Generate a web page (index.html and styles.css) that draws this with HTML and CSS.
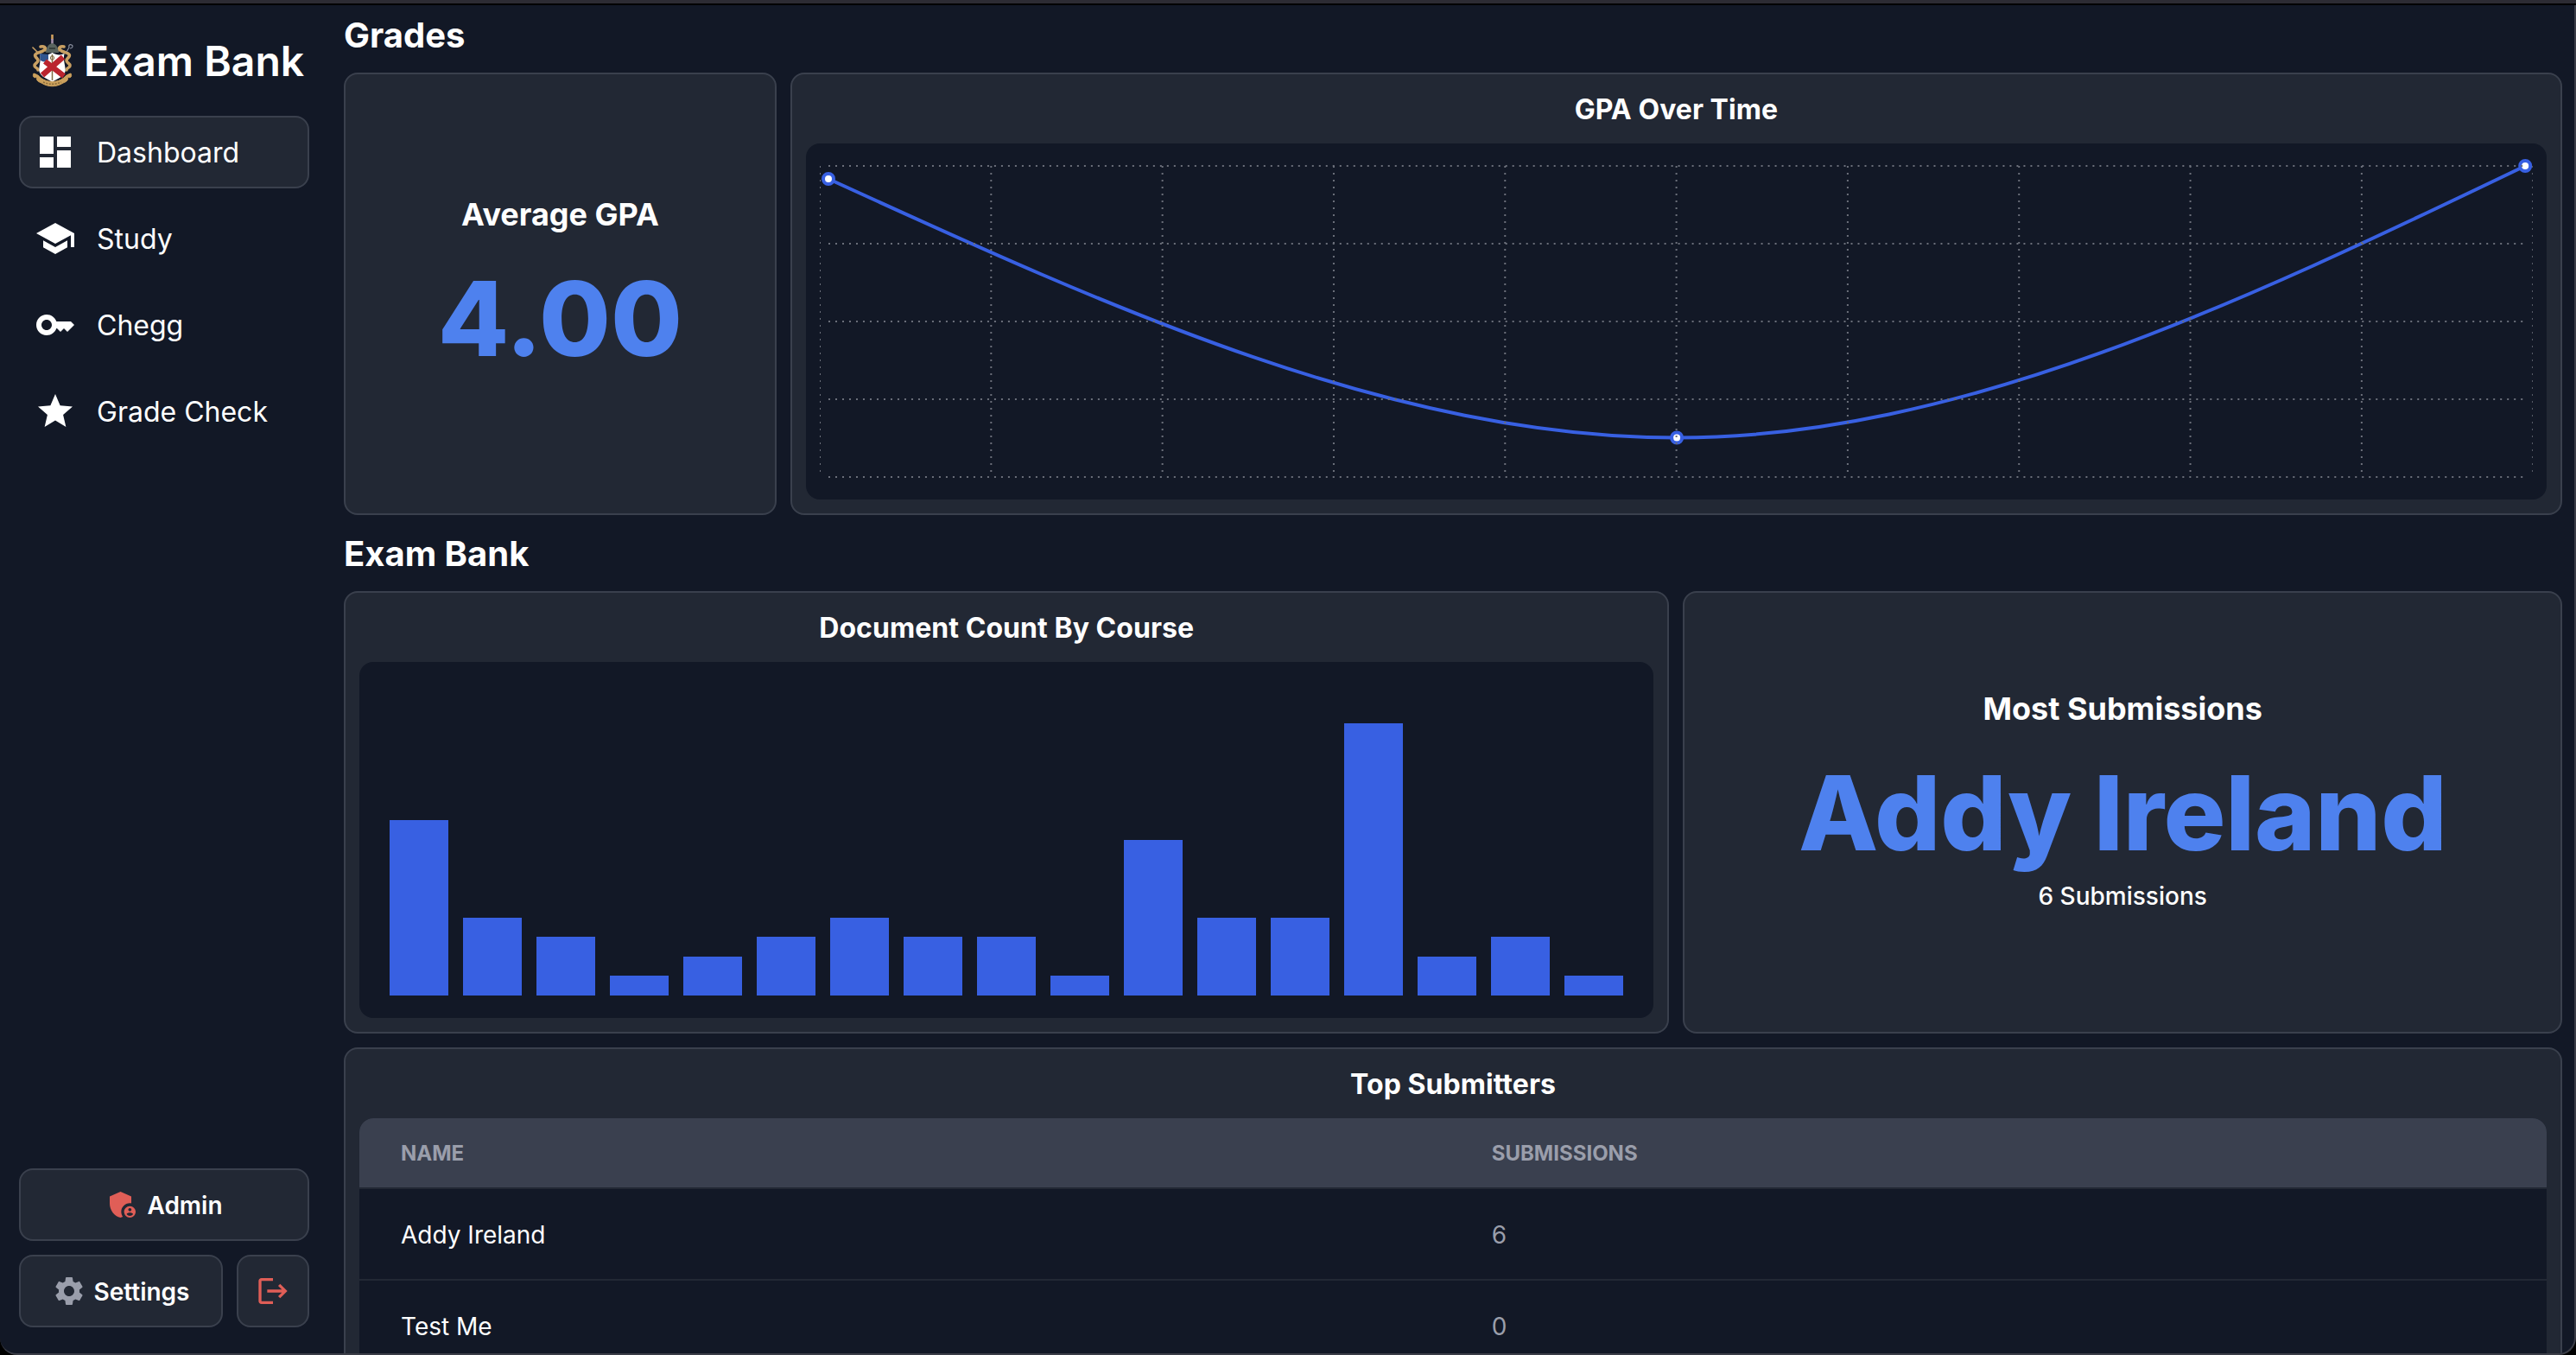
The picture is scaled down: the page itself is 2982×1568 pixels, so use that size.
FILE: index.html
```html
<!DOCTYPE html>
<html lang="en">
<head>
<meta charset="utf-8">
<title>Exam Bank</title>
<link rel="stylesheet" href="styles.css">
</head>
<body>
<div class="window">
  <aside class="sidebar">
    <div class="brand">
      <svg class="crest" viewBox="0 0 50 64">
        <g fill="none" stroke="#c9a063" stroke-linecap="round" stroke-linejoin="round">
          <path d="M2 16l6 6" stroke-width="1.600"/>
          <path d="M11 15c4-1 6 1 6 4M15 19c-3 3-8 2-10 5s3 4 3 7-4 3-4 6 4 2 4 5" stroke-width="3.600"/>
          <path d="M38 15c-4-1-6 1-6 4M34 19c3 3 8 2 10 5s-3 4-3 7 4 3 4 6-4 2-4 5" stroke-width="3.600"/>
        </g>
        <path d="M41 21l3-5c-1-3 1-4 3-3s1 4-2 4" fill="none" stroke="#8d93a3" stroke-width="1.200"/>
        <path d="M24.500 1v6" stroke="#d0a05e" stroke-width="2.600"/>
        <path d="M24.500 6v6" stroke="#a892ad" stroke-width="2.600"/>
        <path d="M17 22c1-7 3-10 7.500-11 4.500 1 6.500 4 7.500 11z" fill="#59645f"/>
        <path d="M21 17h7" stroke="#2b3332" stroke-width="1.500"/>
        <path d="M10 23c5 2 10 2 14.500-1 5 3 10 3 14 1-2 8 2 15 1 21-2 6-9 8-15 12-6-4-13-6-15-12-1-6 2.500-12 .5-21z" fill="#fff"/>
        <path d="M24.500 24v30" stroke="#806b42" stroke-width="1.500"/>
        <circle cx="24.500" cy="28" r="2.200" fill="none" stroke="#806b42"/>
        <path d="M10 23l10 1v6c-3 3-6 3-9 1z" fill="#31558f"/>
        <path d="M37 27L13 48M16 32l22 17" stroke="#bb242e" stroke-width="6.400"/>
        <path d="M3 46c-2 4 1 6 4 4-2 4 2 6 5 7 8 5 17 5 25 0 3-1 7-3 5-7 3 2 6 0 4-4-3 1-6 2-8 5-8 6-19 6-27 0-2-3-5-4-8-5z" fill="#cba05c" stroke="#cba05c"/>
        <path d="M14 56c7 3 14 3 21 0" fill="none" stroke="#876a3a" stroke-width="1.500" stroke-dasharray="2 1.500"/>
      </svg>
      <span class="brand-name">Exam Bank</span>
    </div>
    <nav class="nav">
      <a class="nav-item active"><svg class="icon-lg" viewBox="0 0 24 24"><path d="M3 13h8V3H3v10zm0 8h8v-6H3v6zm10 0h8V11h-8v10zm0-18v6h8V3h-8z"/></svg><span class="label">Dashboard</span></a>
      <a class="nav-item"><svg class="icon-lg" viewBox="0 0 24 24"><path d="M5 13.180v4L12 21l7-3.820v-4L12 17l-7-3.820zM12 3L1 9l11 6 9-4.910V17h2V9L12 3z"/></svg><span class="label">Study</span></a>
      <a class="nav-item"><svg class="icon-lg" viewBox="0 0 24 24"><path d="M21 10h-8.350C11.830 7.670 9.610 6 7 6c-3.310 0-6 2.690-6 6s2.690 6 6 6c2.610 0 4.830-1.670 5.650-4H13l2 2 2-2 2 2 4-4.040L21 10zM7 15c-1.650 0-3-1.350-3-3s1.350-3 3-3 3 1.350 3 3-1.350 3-3 3z"/></svg><span class="label">Chegg</span></a>
      <a class="nav-item"><svg class="icon-lg" viewBox="0 0 24 24"><path d="M12 17.270L18.180 21l-1.640-7.030L22 9.240l-7.190-.610L12 2 9.190 8.630 2 9.240l5.460 4.730L5.820 21z"/></svg><span class="label">Grade Check</span></a>
    </nav>
    <div class="actions">
      <button class="button"><svg class="icon red" viewBox="0 0 24 24"><path d="M17 11c.34 0 .67.04 1 .09V6.270L10.500 3 3 6.270v4.910c0 4.540 3.200 8.790 7.500 9.820.55-.13 1.080-.32 1.600-.55-.69-.98-1.100-2.170-1.100-3.450 0-3.310 2.690-6 6-6z"/><path d="M17 13c-2.210 0-4 1.790-4 4s1.790 4 4 4 4-1.790 4-4-1.790-4-4-4zm0 1.380c.62 0 1.120.51 1.120 1.120s-.51 1.120-1.120 1.120-1.120-.51-1.120-1.120.5-1.120 1.120-1.120zm0 5.370c-.93 0-1.740-.46-2.240-1.170.05-.72 1.510-1.080 2.240-1.080s2.190.36 2.240 1.080c-.5.71-1.310 1.170-2.240 1.170z"/></svg><span class="label">Admin</span></button>
      <div class="action-row">
        <button class="button grow"><svg class="icon gray" viewBox="0 0 24 24"><path d="M19.140 12.940c.04-.3.06-.61.06-.94 0-.32-.02-.64-.07-.94l2.030-1.580c.18-.14.23-.41.12-.61l-1.920-3.320c-.12-.22-.37-.29-.59-.22l-2.390.96c-.5-.38-1.030-.7-1.620-.94l-.36-2.540c-.04-.24-.24-.41-.48-.41h-3.840c-.24 0-.43.17-.47.41l-.36 2.540c-.59.24-1.130.57-1.620.94l-2.390-.96c-.22-.08-.47 0-.59.22L2.740 8.870c-.12.21-.08.47.12.61l2.030 1.580c-.05.3-.09.63-.09.94s.02.64.07.94l-2.030 1.580c-.18.14-.23.41-.12.61l1.920 3.320c.12.22.37.29.59.22l2.390-.96c.5.38 1.030.7 1.620.94l.36 2.540c.05.24.24.41.48.41h3.840c.24 0 .44-.17.47-.41l.36-2.540c.59-.24 1.130-.56 1.620-.94l2.390.96c.22.08.47 0 .59-.22l1.920-3.320c.12-.22.07-.47-.12-.61l-2.010-1.580zM12 15.600c-1.980 0-3.600-1.620-3.600-3.600s1.620-3.600 3.600-3.600 3.600 1.620 3.600 3.600-1.620 3.600-3.600 3.600z"/></svg><span class="label">Settings</span></button>
        <button class="button square" aria-label="Log out"><svg class="icon red" viewBox="0 0 24 24"><path d="M17 7l-1.410 1.410L18.170 11H8v2h10.170l-2.580 2.580L17 17l5-5zM4 5h8V3H4c-1.100 0-2 .9-2 2v14c0 1.100.9 2 2 2h8v-2H4V5z"/></svg></button>
      </div>
    </div>
  </aside>
  <main class="main">
    <h2 class="section-title">Grades</h2>
    <div class="grid">
      <section class="card stat">
        <h3 class="stat-title">Average GPA</h3>
        <div class="stat-value">4.00</div>
      </section>
      <section class="card span-4">
        <h3 class="card-title">GPA Over Time</h3>
        <div class="panel">
          <svg class="line-chart" viewBox="0 0 1984 380" preserveAspectRatio="none">
            <path class="curve" d="M10 25C337.500 174.750 665 324.500 992.500 324.500S1647.500 167.250 1975 10"/>
            <g class="points"><circle cx="10" cy="25" r="6"/><circle cx="992.500" cy="324.500" r="6"/><circle cx="1975" cy="10" r="6"/></g>
            <path class="gridlines" d="M10 10H1974M10 100H1974M10 190H1974M10 280H1974M10 370H1974"/>
            <path class="gridlines" d="M0 10V368M198.400 10V368M396.800 10V368M595.200 10V368M793.600 10V368M992 10V368M1190.400 10V368M1388.800 10V368M1587.200 10V368M1785.600 10V368M1984 10V368"/>
          </svg>
        </div>
      </section>
    </div>
    <h2 class="section-title">Exam Bank</h2>
    <div class="grid">
      <section class="card span-3">
        <h3 class="card-title">Document Count By Course</h3>
        <div class="panel bars">
          <i class="bar" style="height:203px"></i><i class="bar" style="height:90px"></i><i class="bar" style="height:68px"></i><i class="bar" style="height:23px"></i><i class="bar" style="height:45px"></i><i class="bar" style="height:68px"></i><i class="bar" style="height:90px"></i><i class="bar" style="height:68px"></i><i class="bar" style="height:68px"></i><i class="bar" style="height:23px"></i><i class="bar" style="height:180px"></i><i class="bar" style="height:90px"></i><i class="bar" style="height:90px"></i><i class="bar" style="height:315px"></i><i class="bar" style="height:45px"></i><i class="bar" style="height:68px"></i><i class="bar" style="height:23px"></i>
        </div>
      </section>
      <section class="card stat span-2">
        <h3 class="stat-title">Most Submissions</h3>
        <div class="stat-value name">Addy Ireland</div>
        <div class="stat-note">6 Submissions</div>
      </section>
    </div>
    <section class="card table-card">
      <h3 class="card-title">Top Submitters</h3>
      <table class="table">
        <thead><tr><th class="name-column">Name</th><th>Submissions</th></tr></thead>
        <tbody>
          <tr><td>Addy Ireland</td><td class="count">6</td></tr>
          <tr><td>Test Me</td><td class="count">0</td></tr>
        </tbody>
      </table>
    </section>
  </main>
</div>
</body>
</html>
```
FILE: styles.css
```css
* { box-sizing: border-box; }
body {
  margin: 0;
  height: 1568px;
  overflow: hidden;
  background: #000;
  color: #fff;
  font-family: Inter, "Liberation Sans", sans-serif;
  border-top: 4px solid #2c2b33;
  padding-top: 2px;
}
h2, h3 { margin: 0; }
.window {
  display: flex;
  height: 1562px;
  overflow: hidden;
  background: #121826;
  border-right: 2px solid #3b3d47;
  border-bottom: 2px solid #3b3d47;
  border-radius: 0 0 20px 20px;
}
.sidebar {
  width: 380px;
  flex: none;
  padding: 33px 22px 30px;
  display: flex;
  flex-direction: column;
}
.brand { display: flex; height: 95px; padding-left: 14px; }
.crest { width: 50px; height: 64px; margin-right: 11px; }
.brand-name { font-size: 48px; line-height: 64px; font-weight: 600; white-space: nowrap; }
.nav { display: flex; flex-direction: column; gap: 16px; }
.nav-item {
  display: flex;
  align-items: center;
  gap: 24px;
  height: 84px;
  padding: 0 16px;
  border: 2px solid transparent;
  border-radius: 16px;
  font-size: 32px;
  line-height: 48px;
}
.nav-item.active { background: #222834; border-color: #3a404d; }
.label { padding-top: 2px; }
.icon-lg { width: 48px; height: 48px; fill: #fff; }
.actions { margin-top: auto; display: flex; flex-direction: column; gap: 16px; }
.action-row { display: flex; gap: 16px; }
.button {
  display: flex;
  align-items: center;
  justify-content: center;
  gap: 8px;
  height: 84px;
  padding: 0;
  background: #222834;
  border: 2px solid #3a404d;
  border-radius: 16px;
  color: #fff;
  font: 600 28px/40px Inter, "Liberation Sans", sans-serif;
}
.grow { flex: 1; }
.square { width: 84px; }
.icon { width: 40px; height: 40px; }
.red { fill: #e05e57; }
.gray { fill: #9a9eab; }
.main {
  flex: 1;
  min-width: 0;
  display: flex;
  flex-direction: column;
  gap: 16px;
  padding: 6px 14px 0 18px;
}
.section-title { padding-top: 2px; font-size: 40px; line-height: 54px; font-weight: 700; }
.grid { display: grid; grid-template-columns: repeat(5, minmax(0, 1fr)); gap: 16px; flex: none; }
.span-2 { grid-column: span 2; }
.span-3 { grid-column: span 3; }
.span-4 { grid-column: span 4; }
.card {
  height: 512px;
  display: flex;
  flex-direction: column;
  gap: 16px;
  padding: 16px;
  background: #222834;
  border: 2px solid #3a404d;
  border-radius: 16px;
}
.card-title {
  padding-top: 2px;
  font-size: 32px;
  line-height: 46px;
  font-weight: 700;
  letter-spacing: 0.05px;
  text-align: center;
}
.panel { height: 412px; border-radius: 16px; background: #121826; padding: 16px; }
.line-chart { display: block; width: 100%; height: 380px; }
.curve { fill: none; stroke: #3860e2; stroke-width: 4; }
.points { fill: #fff; stroke: #3860e2; stroke-width: 4; }
.gridlines { fill: none; stroke: #6b6f7a; stroke-width: 2; stroke-dasharray: 2 6; }
.bars { display: flex; align-items: flex-end; gap: 17px; padding: 0 35px 26px; }
.bar { flex: 1; background: #3860e2; }
.stat { align-items: center; justify-content: center; gap: 0; }
.stat-title { font-size: 36px; line-height: 56px; font-weight: 700; }
.stat-value {
  margin: 33px 0 31px;
  font-size: 120px;
  line-height: 120px;
  font-weight: 800;
  color: #4e81ee;
  white-space: nowrap;
}
.stat-value.name { letter-spacing: -0.3px; }
.stat-note { margin: -15px 0 32px; font-size: 28px; line-height: 40px; font-weight: 500; }
.table-card { height: auto; flex: none; }
.table {
  width: 100%;
  table-layout: fixed;
  border-spacing: 0;
  background: #121826;
  border-radius: 16px;
  overflow: hidden;
  text-align: left;
}
.table th {
  padding: 25px 48px 23px;
  background: #3a404f;
  color: #9a9eab;
  font-size: 24px;
  line-height: 32px;
  font-weight: 700;
  text-transform: uppercase;
}
.table .name-column { width: 49.87%; }
.table td {
  padding: 33px 48px 31px;
  border-top: 2px solid #222834;
  font-size: 28px;
  line-height: 40px;
  font-weight: 400;
}
.table .count { color: #9a9eab; }
```
